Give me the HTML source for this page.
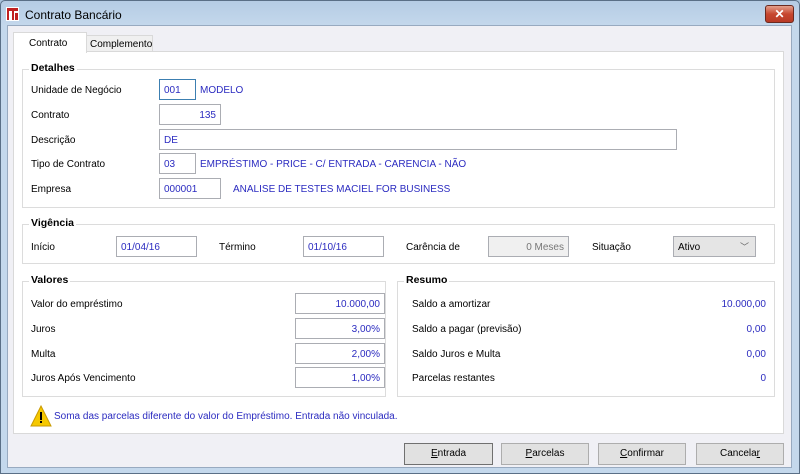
<!DOCTYPE html><html><head><meta charset="utf-8"><style>
*{box-sizing:border-box}body{margin:0;width:800px;height:474px;overflow:hidden;font-family:"Liberation Sans",sans-serif;font-size:10px;color:#000;background:#a9c3dc}
.a{position:absolute}
#win{position:absolute;left:0;top:0;width:800px;height:474px;background:linear-gradient(#b5cce4,#c4d8ec 25px);border:1px solid #5a6f86;border-radius:5px 5px 0 0}
#body{position:absolute;left:7px;top:25px;width:785px;height:443px;background:#f0f0f5;border:1px solid #98aac0}
.in{position:absolute;background:#fff;border:1px solid #abadb3;height:21px;color:#2b2bc0;padding:4px 4px;line-height:13px;white-space:nowrap}
.r{text-align:right}
.g{position:absolute;border:1px solid #dcdcdc}
.gt{position:absolute;background:#fff;font-weight:bold;padding:0 2px;top:-8px;left:6px;font-size:10.5px}
.bl{color:#2b2bc0}
.btn{position:absolute;top:443px;height:22px;border:1px solid #adadad;background:#e1e1e1;text-align:center;line-height:20px}
</style></head><body>
<div id="win"></div>
<svg class="a" style="left:6px;top:7px" width="13" height="14"><rect width="13" height="14" fill="#fff"/><path d="M1 1h11v3H8v9H6V4H3v9H1z" fill="#c02020"/><path d="M9 6h3v7H9z" fill="#c02020"/></svg>
<div class="a" style="left:25px;top:8px;font-size:12px">Contrato Bancário</div>
<div class="a" style="left:765px;top:5px;width:29px;height:18px;border:1px solid #6b2a20;border-radius:3px;background:linear-gradient(#e3a08c,#c7472f 50%,#b83a25);color:#fff;font-weight:bold;text-align:center;line-height:16px;font-size:12px">✕</div>
<div id="body"></div>
<div class="a" style="left:13px;top:51px;width:771px;height:383px;background:#fff;border:1px solid #d9d9d9"></div>
<div class="a" style="left:13px;top:32px;width:74px;height:21px;background:#fff;border:1px solid #d9d9d9;border-bottom:none;padding:5px 0 0 15px">Contrato</div>
<div class="a" style="left:86px;top:35px;width:67px;height:17px;background:#f0f0f0;border:1px solid #d9d9d9;padding:3px 0 0 3px">Complemento</div>

<div class="g" style="left:22px;top:69px;width:753px;height:139px"><div class="gt">Detalhes</div></div>
<div class="a" style="left:31px;top:85px">Unidade de Negócio</div>
<div class="in" style="left:159px;top:79px;width:37px;border-color:#3c7fb1">001</div><div class="a bl" style="left:200px;top:85px">MODELO</div>
<div class="a" style="left:31px;top:110px">Contrato</div><div class="in r" style="left:159px;top:104px;width:62px">135</div>
<div class="a" style="left:31px;top:135px">Descrição</div><div class="in" style="left:159px;top:129px;width:518px">DE</div>
<div class="a" style="left:31px;top:159px">Tipo de Contrato</div><div class="in" style="left:159px;top:153px;width:37px">03</div>
<div class="a bl" style="left:200px;top:159px">EMPRÉSTIMO - PRICE - C/ ENTRADA - CARENCIA - NÃO</div>
<div class="a" style="left:31px;top:184px">Empresa</div><div class="in" style="left:159px;top:178px;width:62px">000001</div>
<div class="a bl" style="left:233px;top:184px">ANALISE DE TESTES MACIEL FOR BUSINESS</div>

<div class="g" style="left:22px;top:224px;width:753px;height:40px"><div class="gt">Vigência</div></div>
<div class="a" style="left:31px;top:242px">Início</div><div class="in" style="left:116px;top:236px;width:81px">01/04/16</div>
<div class="a" style="left:219px;top:242px">Término</div><div class="in" style="left:303px;top:236px;width:81px">01/10/16</div>
<div class="a" style="left:406px;top:242px">Carência de</div><div class="in r" style="left:488px;top:236px;width:81px;background:#f0f0f0;color:#777">0 Meses</div>
<div class="a" style="left:592px;top:242px">Situação</div>
<div class="in" style="left:673px;top:236px;width:83px;background:#e5e5e5;color:#000">Ativo<span style="position:absolute;right:6px;color:#666;font-size:9px">﹀</span></div>

<div class="g" style="left:22px;top:281px;width:364px;height:116px"><div class="gt">Valores</div></div>
<div class="a" style="left:31px;top:299px">Valor do empréstimo</div><div class="in r" style="left:295px;top:293px;width:90px">10.000,00</div>
<div class="a" style="left:31px;top:324px">Juros</div><div class="in r" style="left:295px;top:318px;width:90px">3,00%</div>
<div class="a" style="left:31px;top:349px">Multa</div><div class="in r" style="left:295px;top:343px;width:90px">2,00%</div>
<div class="a" style="left:31px;top:373px">Juros Após Vencimento</div><div class="in r" style="left:295px;top:367px;width:90px">1,00%</div>

<div class="g" style="left:397px;top:281px;width:378px;height:116px"><div class="gt">Resumo</div></div>
<div class="a" style="left:412px;top:299px">Saldo a amortizar</div><div class="a bl" style="right:34px;top:299px">10.000,00</div>
<div class="a" style="left:412px;top:324px">Saldo a pagar (previsão)</div><div class="a bl" style="right:34px;top:324px">0,00</div>
<div class="a" style="left:412px;top:349px">Saldo Juros e Multa</div><div class="a bl" style="right:34px;top:349px">0,00</div>
<div class="a" style="left:412px;top:373px">Parcelas restantes</div><div class="a bl" style="right:34px;top:373px">0</div>

<svg class="a" style="left:30px;top:405px" width="22" height="22"><path d="M11 1L21 21H1z" fill="#f5c800" stroke="#c99a00"/><rect x="10" y="7" width="2" height="8" fill="#000"/><rect x="10" y="16" width="2" height="2" fill="#000"/></svg>
<div class="a bl" style="left:54px;top:411px">Soma das parcelas diferente do valor do Empréstimo. Entrada não vinculada.</div>

<div class="btn" style="left:404px;width:89px;border-color:#707070"><u>E</u>ntrada</div>
<div class="btn" style="left:501px;width:88px"><u>P</u>arcelas</div>
<div class="btn" style="left:598px;width:88px"><u>C</u>onfirmar</div>
<div class="btn" style="left:696px;width:88px">Cancela<u>r</u></div>
</body></html>
